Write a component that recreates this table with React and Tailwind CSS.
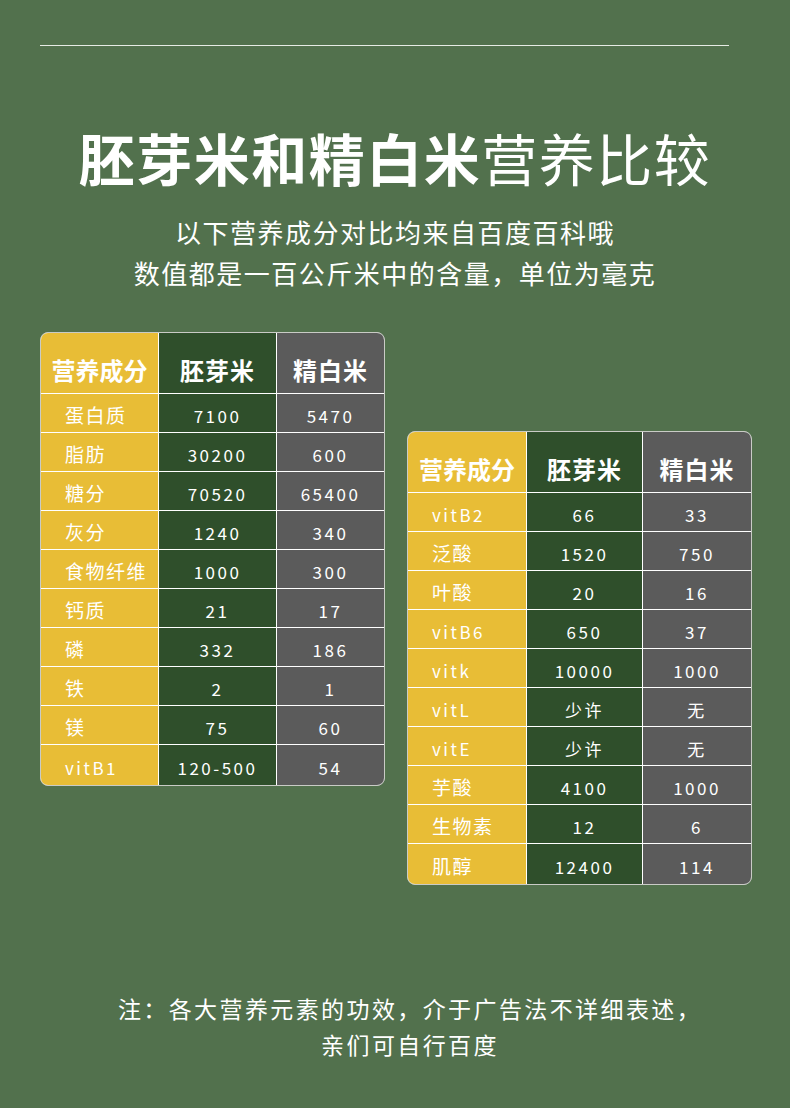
import React from "react";

const FONT = { fontFamily: "'Noto Sans CJK SC', 'Noto Sans', sans-serif" };

const left = [
  ["蛋白质", "7100", "5470"],
  ["脂肪", "30200", "600"],
  ["糖分", "70520", "65400"],
  ["灰分", "1240", "340"],
  ["食物纤维", "1000", "300"],
  ["钙质", "21", "17"],
  ["磷", "332", "186"],
  ["铁", "2", "1"],
  ["镁", "75", "60"],
  ["vitB1", "120-500", "54"],
];

const right = [
  ["vitB2", "66", "33"],
  ["泛酸", "1520", "750"],
  ["叶酸", "20", "16"],
  ["vitB6", "650", "37"],
  ["vitk", "10000", "1000"],
  ["vitL", "少许", "无"],
  ["vitE", "少许", "无"],
  ["芋酸", "4100", "1000"],
  ["生物素", "12", "6"],
  ["肌醇", "12400", "114"],
];

const isLatin = (s) => /^[a-zA-Z0-9]+$/.test(s);

function Table({ rows, cols }) {
  return (
    <div className="w-[345px] rounded-[8px] border border-[#c9cbc6] bg-white overflow-hidden">
      <div className={`grid ${cols} gap-px`}>
        <div className="h-[60px] pt-[13px] bg-[#e8bd36] flex items-center justify-center text-white text-[24px] font-bold">营养成分</div>
        <div className="h-[60px] pt-[13px] bg-[#2f4f2b] flex items-center justify-center text-white text-[24px] font-bold tracking-[1px]">胚芽米</div>
        <div className="h-[60px] pt-[13px] bg-[#5b5b5b] flex items-center justify-center text-white text-[24px] font-bold tracking-[1px]">精白米</div>
        {rows.map((r, i) => {
          const h = i === rows.length - 1 ? "h-[40px]" : "h-[38px]";
          return (
            <React.Fragment key={i}>
              <div
                className={`${h} pt-[5px] bg-[#e8bd36] flex items-center pl-[24px] text-white ${
                  isLatin(r[0]) ? "text-[17px] tracking-[2.5px]" : "text-[19px] tracking-[1.5px]"
                }`}
              >
                {r[0]}
              </div>
              <div className={`${h} pt-[5px] bg-[#2f4f2b] flex items-center justify-center text-white text-[17px] tracking-[2.5px]`}>{r[1]}</div>
              <div className={`${h} pt-[5px] bg-[#5b5b5b] flex items-center justify-center text-white text-[17px] tracking-[2.5px]`}>{r[2]}</div>
            </React.Fragment>
          );
        })}
      </div>
    </div>
  );
}

export default function App() {
  return (
    <div style={FONT} className="w-[790px] min-h-[1108px] bg-[#52714d] pt-[45px] text-white">
      <div className="mx-[40px] w-[689px] h-px bg-[#e6ebe4]" />
      <div className="mt-[79px] h-[64px] flex items-center justify-center text-[56px] leading-[64px] tracking-[1.5px]">
        <span className="font-bold">胚芽米和精白米</span>
        <span>营养比较</span>
      </div>
      <div className="mt-[22px] text-center text-[26px] leading-[41px] tracking-[1.5px]">
        <div>以下营养成分对比均来自百度百科哦</div>
        <div>数值都是一百公斤米中的含量，单位为毫克</div>
      </div>
      <div className="mt-[39px] pl-[40px] flex items-start gap-[22px]">
        <Table rows={left} cols="grid-cols-[117px_117px_1fr]" />
        <div className="mt-[99px]">
          <Table rows={right} cols="grid-cols-[118px_115px_1fr]" />
        </div>
      </div>
      <div className="mt-[105px] pl-[30px] text-center text-[23px] leading-[36px] tracking-[2.4px]">
        <div>注：各大营养元素的功效，介于广告法不详细表述，</div>
        <div>亲们可自行百度</div>
      </div>
    </div>
  );
}
